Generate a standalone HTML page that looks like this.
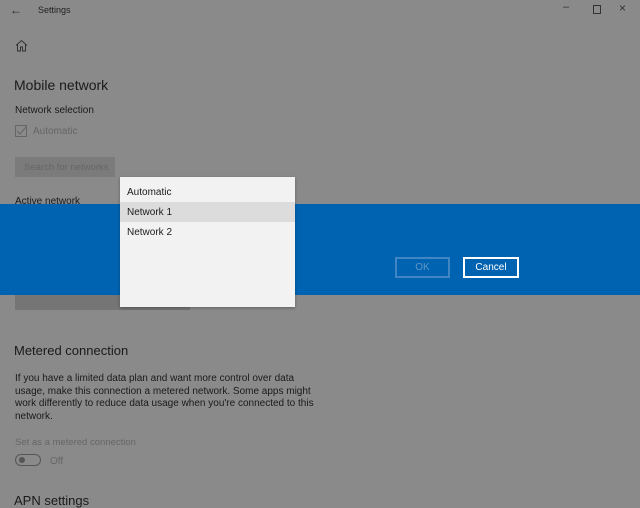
<!DOCTYPE html>
<html><head><style>
body{margin:0;width:640px;height:500px;overflow:hidden;background:#8a8a8a;font-family:"Liberation Sans",sans-serif;position:relative;color:#1a1a1a}
.a{position:absolute;white-space:nowrap}
</style></head><body>
<div class="a" style="left:10px;top:3px;font-size:12px;color:#222">&#8592;</div>
<div class="a" style="left:38px;top:5px;font-size:9px;color:#222">Settings</div>
<div class="a" style="left:563px;top:1px;font-size:11px;color:#333">&#8211;</div>
<div class="a" style="left:593px;top:5px;width:6px;height:7px;border:1px solid #333"></div>
<div class="a" style="left:619px;top:1px;font-size:12px;color:#333">&#215;</div>
<svg class="a" style="left:15px;top:39px" width="13" height="13" viewBox="0 0 13 13"><path d="M1 6.5L6.5 1.5L12 6.5M2.5 5V12H5.5V8H7.5V12H10.5V5" fill="none" stroke="#333" stroke-width="1"/></svg>
<div class="a" style="left:14px;top:77px;font-size:14px">Mobile network</div>
<div class="a" style="left:15px;top:105px;font-size:10px">Network selection</div>
<svg class="a" style="left:15px;top:125px" width="13" height="13" viewBox="0 0 13 13"><rect x="0.5" y="0.5" width="11" height="11" fill="none" stroke="#666"/><path d="M2 6L5 9L11 2" fill="none" stroke="#666" stroke-width="1"/></svg>
<div class="a" style="left:33px;top:126px;font-size:10px;color:#666">Automatic</div>
<div class="a" style="left:15px;top:157px;width:100px;height:20px;background:#7b7b7b"></div>
<div class="a" style="left:24px;top:162px;font-size:9.5px;color:#666">Search for networks</div>
<div class="a" style="left:15px;top:196px;font-size:10px">Active network</div>
<div class="a" style="left:0;top:204px;width:640px;height:91px;background:#0063b1"></div>
<div class="a" style="left:395px;top:257px;width:51px;height:17px;border:2px solid #3f86c2;color:#5e96c4;font-size:10px;text-align:center;line-height:17px">OK</div>
<div class="a" style="left:463px;top:257px;width:52px;height:17px;border:2px solid #fff;color:#fff;font-size:10px;text-align:center;line-height:18px">Cancel</div>
<div class="a" style="left:15px;top:295px;width:175px;height:15px;background:#757575"></div>
<div class="a" style="left:120px;top:177px;width:175px;height:130px;background:#f2f2f2;box-shadow:0 1px 3px rgba(0,0,0,.3)"></div>
<div class="a" style="left:120px;top:202px;width:175px;height:20px;background:#dcdcdc"></div>
<div class="a" style="left:127px;top:187px;font-size:10px">Automatic</div>
<div class="a" style="left:127px;top:207px;font-size:10px">Network 1</div>
<div class="a" style="left:127px;top:227px;font-size:10px">Network 2</div>
<div class="a" style="left:14px;top:343px;font-size:13px">Metered connection</div>
<div class="a" style="left:15px;top:373px;font-size:10px;line-height:12.5px;white-space:normal;width:300px">If you have a limited data plan and want more control over data usage, make this connection a metered network. Some apps might work differently to reduce data usage when you're connected to this network.</div>
<div class="a" style="left:15px;top:437px;font-size:9.5px;color:#666">Set as a metered connection</div>
<div class="a" style="left:15px;top:454px;width:24px;height:10px;border:1.5px solid #555;border-radius:7px"></div>
<div class="a" style="left:19px;top:457px;width:6px;height:6px;border-radius:50%;background:#555"></div>
<div class="a" style="left:50px;top:456px;font-size:10px;color:#666">Off</div>
<div class="a" style="left:14px;top:493px;font-size:13px">APN settings</div>
</body></html>
